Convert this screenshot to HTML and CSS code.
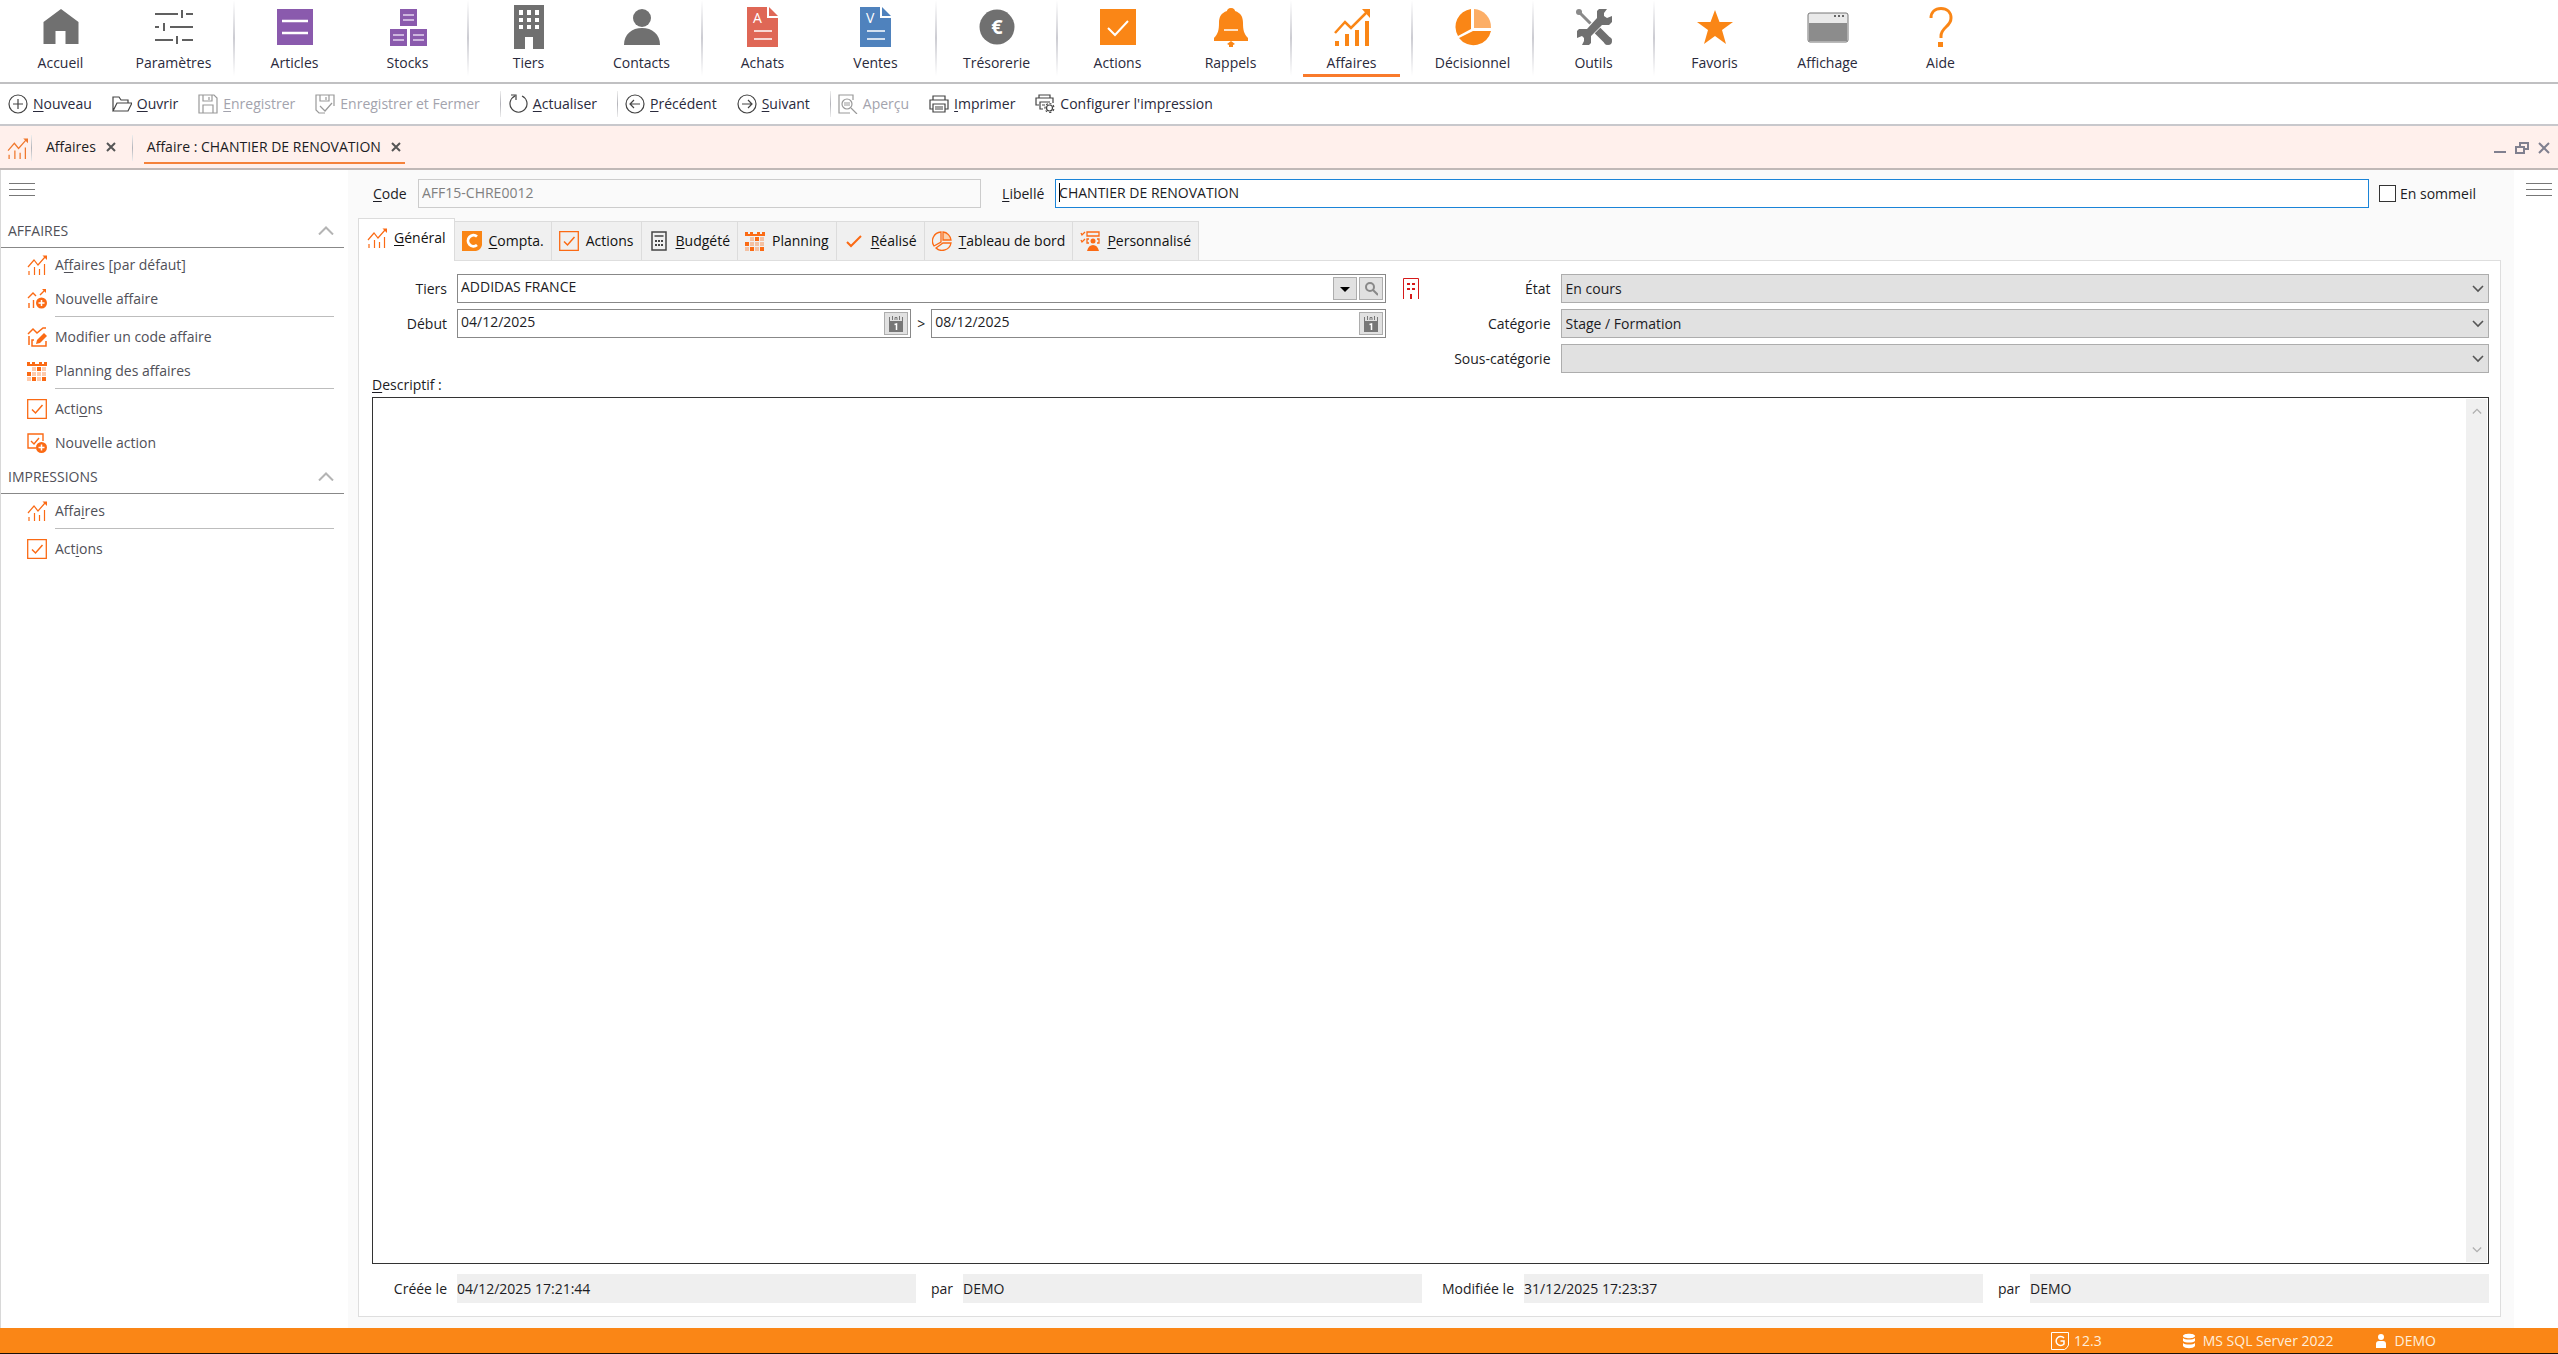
FILE: index.html
```html
<!DOCTYPE html>
<html lang="fr">
<head>
    <meta charset="UTF-8">
    <meta name="viewport" content="width=device-width, initial-scale=1.0">
    <title>Affaire : CHANTIER DE RENOVATION</title>
    <link rel="stylesheet" href="styles.css">
</head>
<body>
    <!-- Icônes partagées -->
    <svg class="symbols" aria-hidden="true">
        <symbol id="i-chart" viewBox="0 0 20 20">
            <g fill="none" stroke="currentColor" stroke-width="1.2">
                <path d="M1 12 7 5l4 5 7-8"/>
                <path d="M2 20v-4M7.500 20v-8M12.500 20v-6M17.500 20V9"/>
            </g>
            <path fill="currentColor" d="M15.500.500H20V5z"/>
        </symbol>
        <symbol id="i-chart-plus" viewBox="0 0 20 20">
            <g fill="none" stroke="currentColor" stroke-width="1.4">
                <path d="M1 9l5-5 3 3M13 6l5-5M2 19v-5M6.500 19v-8"/>
            </g>
            <path fill="currentColor" d="M15 0h4v4z"/>
            <circle cx="14.500" cy="14" r="5.500" fill="currentColor"/>
            <path stroke="#fff" stroke-width="1.500" d="M11.500 14h6M14.500 11v6"/>
        </symbol>
        <symbol id="i-chart-edit" viewBox="0 0 20 20">
            <g fill="none" stroke="currentColor" stroke-width="1.500">
                <path d="M1 7l5-5 4 4 6-5h3M2 18V9M7 13H5v6h14v-5"/>
            </g>
            <path fill="currentColor" d="M9 17l1-4 7-7 3 3-7 7z"/>
        </symbol>
        <symbol id="i-planning" viewBox="0 0 20 20">
            <path fill="currentColor" d="M0 1h3v2h2V1h3v2h4V1h3v2h2V1h3v4H0zM10 6h4v4h-4zM0 11h4v4H0zM5 16h4v4H5zM15 16h4v4h-4z"/>
            <path fill="currentColor" opacity=".35" d="M5 6h4v4H5zM15 6h4v4h-4zM5 11h4v4H5zM10 11h4v4h-4zM15 11h4v4h-4zM0 16h4v4H0zM10 16h4v4h-4z"/>
        </symbol>
        <symbol id="i-check" viewBox="0 0 20 20">
            <path fill="none" stroke="currentColor" stroke-width="1.300" d="M.700.700h18.600v18.600H.700z"/>
            <path fill="none" stroke="currentColor" stroke-width="1.500" d="M5 10.500l3.500 3.500 7-8"/>
        </symbol>
        <symbol id="i-check-plus" viewBox="0 0 20 20">
            <path fill="none" stroke="currentColor" stroke-width="1.400" d="M9 15H1V1h15v7M4 8l3 3 5-6"/>
            <circle cx="14.500" cy="14.500" r="5.500" fill="currentColor"/>
            <path stroke="#fff" stroke-width="1.500" d="M11.500 14.500h6M14.500 11.500v6"/>
        </symbol>
        <symbol id="i-menu" viewBox="0 0 26 16">
            <path fill="#777" d="M0 1h26v1H0zM0 7h26v1H0zM0 13h26v1H0z"/>
        </symbol>
        <symbol id="i-up" viewBox="0 0 16 9">
            <path fill="none" stroke="#b4b4b4" stroke-width="2" d="M1 8.500l7-7 7 7"/>
        </symbol>
        <symbol id="i-down" viewBox="0 0 12 8">
            <path fill="none" stroke="currentColor" stroke-width="1.600" d="M1 1l5 5 5-5"/>
        </symbol>
        <symbol id="i-close" viewBox="0 0 12 12">
            <path fill="none" stroke="currentColor" stroke-width="2" d="M2 2l8 8M10 2l-8 8"/>
        </symbol>
        <symbol id="i-calendar" viewBox="0 0 14 16">
            <path fill="#777" d="M0 5h14v11H0z"/>
            <path fill="none" stroke="#777" d="M.500 5V1M3.500 4V0M6 4V1.500h2V4M10.500 4V0M13.500 5V1"/>
            <path fill="none" stroke="#fff" stroke-width="1.500" d="M5.500 8.500L7.500 8v6"/>
        </symbol>
    </svg>

    <nav class="ribbon">
        <button class="ribbon-item">
            <svg viewBox="0 0 44 44"><path fill="#707070" d="M22 4L4.500 17v22h12V26h10v13h13V17z"/></svg>
            Accueil
        </button>
        <button class="ribbon-item">
            <svg viewBox="0 0 44 44"><path stroke="#606060" stroke-width="2" d="M3 9h23M30 5v8M34 9h7M3 22h4M12 18v8M18 22h23M3 35h18M25 31v8M30 35h11"/></svg>
            Paramètres
        </button>
        <span class="ribbon-sep"></span>
        <button class="ribbon-item">
            <svg viewBox="0 0 44 44"><path fill="#8a5aad" d="M4 4h36v36H4z"/><path stroke="#fff" stroke-width="2.500" d="M9 16h26M9 28h26"/></svg>
            Articles
        </button>
        <button class="ribbon-item">
            <svg viewBox="0 0 44 44"><path fill="#8a5aad" d="M14 4h17v17H14zM4 24h17v17H4zM24 24h17v17H24z"/><path stroke="#e3d3ee" stroke-width="1.500" d="M17 10h11M17 15h11M7 30h11M7 35h11M27 30h11M27 35h11"/></svg>
            Stocks
        </button>
        <span class="ribbon-sep"></span>
        <button class="ribbon-item">
            <svg viewBox="0 0 44 44"><path fill="#707070" d="M7 0h30v44H26V32h-8v12H7z"/><path fill="#fff" d="M12 5h4v5h-4zM20 5h4v5h-4zM28 5h4v5h-4zM12 13h4v4h-4zM20 13h4v4h-4zM28 13h4v4h-4zM12 20h4v4h-4zM20 20h4v4h-4zM28 20h4v4h-4z"/></svg>
            Tiers
        </button>
        <button class="ribbon-item">
            <svg viewBox="0 0 44 44"><circle cx="22" cy="13" r="9" fill="#707070"/><path fill="#707070" d="M4 40c0-11 8-17 18-17s18 6 18 17z"/></svg>
            Contacts
        </button>
        <span class="ribbon-sep"></span>
        <button class="ribbon-item">
            <svg viewBox="0 0 44 44"><path fill="#df6756" d="M6 2h20v11h11v29H6z"/><path fill="#df6756" d="M28 2l9 9h-9z"/><path stroke="#fff" stroke-width="1.500" d="M13 26h18M13 34h18"/><text x="12" y="18" class="doc-letter">A</text></svg>
            Achats
        </button>
        <button class="ribbon-item">
            <svg viewBox="0 0 44 44"><path fill="#4f82bd" d="M6 2h20v11h11v29H6z"/><path fill="#4f82bd" d="M28 2l9 9h-9z"/><path stroke="#fff" stroke-width="1.500" d="M13 26h18M13 34h18"/><text x="12" y="18" class="doc-letter">V</text></svg>
            Ventes
        </button>
        <span class="ribbon-sep"></span>
        <button class="ribbon-item">
            <svg viewBox="0 0 44 44"><circle cx="22" cy="22" r="17.500" fill="#707070"/><text x="22" y="29" class="euro">€</text></svg>
            Trésorerie
        </button>
        <span class="ribbon-sep"></span>
        <button class="ribbon-item">
            <svg viewBox="0 0 44 44"><path fill="#fa8616" d="M4 4h36v36H4z"/><path fill="none" stroke="#fff" stroke-width="2" d="M12 23l7 7 13-14"/></svg>
            Actions
        </button>
        <button class="ribbon-item">
            <svg viewBox="0 0 44 44"><path fill="#fa8616" d="M22 3c3 0 4 2 4 3 6 2 8 6 8 12 0 7 1 11 5 15v3H5v-3c4-4 5-8 5-15 0-6 2-10 8-12 0-1 1-3 4-3z"/><path fill="#fa8616" d="M18 39l4-3 4 3-2 1v2h-4v-2z"/><path stroke="#fff" stroke-width="1.500" d="M15 25h14"/></svg>
            Rappels
        </button>
        <span class="ribbon-sep"></span>
        <button class="ribbon-item active">
            <svg viewBox="0 0 44 44"><path fill="none" stroke="#fa8616" stroke-width="2.500" d="M5 28l10-11 6 6L38 6"/><path fill="#fa8616" d="M32 4h8v9zM5 36h4v5H5zM15 29h4v12h-4zM25 25h4v16h-4zM35 16h4v25h-4z"/></svg>
            Affaires
        </button>
        <span class="ribbon-sep"></span>
        <button class="ribbon-item">
            <svg viewBox="0 0 44 44"><path fill="#fa8616" d="M20 4v20L7 31A18 18 0 0 1 20 4zM22 26h18A18 18 0 0 1 8 33z"/><path fill="#fcae66" d="M23 4a18 18 0 0 1 17 19H23z"/></svg>
            Décisionnel
        </button>
        <span class="ribbon-sep"></span>
        <button class="ribbon-item">
            <svg viewBox="0 0 44 44"><path stroke="#8a8a8a" stroke-width="3" d="M7 7l12 12"/><circle cx="7" cy="7" r="3" fill="#8a8a8a"/><path stroke="#707070" stroke-width="8" d="M25 25l12 12"/><circle cx="36" cy="36" r="4" fill="#707070"/><path stroke="#fff" stroke-width="10" d="M14 30l16-16"/><path fill="#707070" d="M25 6l2-2h8l-3 4v3l3 2 5-2v6l-3 3h-7L19 31v7l-2 2h-7l2-4v-3l-2-2-5 2v-7l2-2h8l10-11z"/></svg>
            Outils
        </button>
        <span class="ribbon-sep"></span>
        <button class="ribbon-item">
            <svg viewBox="0 0 44 44"><path fill="#fa8616" d="M22 5l4.500 12H40L29 25l4 14-11-8-11 8 4-14L4 17h13.500z"/></svg>
            Favoris
        </button>
        <button class="ribbon-item">
            <svg viewBox="0 0 44 44"><rect x="2" y="8" width="40" height="29" rx="2" fill="#e9e9e9" stroke="#777"/><path fill="#8c8c8c" d="M3 18h38v18H3z"/><path fill="#666" d="M28 10h2v2h-2zM32 10h2v2h-2zM36 10h2v2h-2z"/></svg>
            Affichage
        </button>
        <button class="ribbon-item">
            <svg viewBox="0 0 44 44"><path fill="none" stroke="#fa8616" stroke-width="3" d="M12 13c0-6 4-9.500 10-9.500S32 7 32 13c0 9-10 9-10 18v2"/><path fill="#fa8616" d="M19 37h5v5h-5z"/></svg>
            Aide
        </button>
    </nav>

    <div class="toolbar">
        <button class="tool"><svg viewBox="0 0 20 20"><circle cx="10" cy="10" r="9"/><path d="M10 5v10M5 10h10"/></svg><span><u>N</u>ouveau</span></button>
        <button class="tool"><svg viewBox="0 0 20 20"><path d="M1 17V3h6l2 3h7v3M1 17L5 9h15l-4 8z"/></svg><span><u>O</u>uvrir</span></button>
        <button class="tool" disabled><svg viewBox="0 0 20 20"><path d="M1 1h15l3 3v15H1zM5 1v6h9V1M5 19v-8h10v8M11 3v3"/></svg><span><u>E</u>nregistrer</span></button>
        <button class="tool" disabled><svg viewBox="0 0 20 20"><path d="M10 19H4l-3-3V1h18v11M5 1v6h9V1M11 3v3M5 12l5 5 7-8"/></svg><span>Enregistrer et Fermer</span></button>
        <span class="tool-sep"></span>
        <button class="tool"><svg viewBox="0 0 20 20"><path d="M7 2a8.500 8.500 0 1 0 7 0M3 1h5v5"/></svg><span><u>A</u>ctualiser</span></button>
        <span class="tool-sep"></span>
        <button class="tool"><svg viewBox="0 0 20 20"><circle cx="10" cy="10" r="9"/><path d="M15 10H5M9 6l-4 4 4 4"/></svg><span><u>P</u>récédent</span></button>
        <button class="tool"><svg viewBox="0 0 20 20"><circle cx="10" cy="10" r="9"/><path d="M5 10h10M11 6l4 4-4 4"/></svg><span><u>S</u>uivant</span></button>
        <span class="tool-sep"></span>
        <button class="tool" disabled><svg viewBox="0 0 20 20"><path d="M12 19H1V1h14v5M13 14l6 6"/><circle cx="9" cy="10" r="5"/><path d="M6 9h6M6 11h6"/></svg><span>Aperçu</span></button>
        <button class="tool"><svg viewBox="0 0 20 20"><path d="M4 6V2h12v4M4 15H1V6h18v9h-3M4 10h12v8H4zM6 13h8M6 15h8"/></svg><span><u>I</u>mprimer</span></button>
        <button class="tool"><svg viewBox="0 0 20 20"><path d="M4 4V1h11v3M4 11H1V4h17v5M8 15H5V8h10M7 11h3"/><circle cx="14.500" cy="14" r="3"/><path stroke-dasharray="2 2" d="M14.500 9.500a4.500 4.500 0 1 1-.1 0"/></svg><span>Configurer l'imp<u>r</u>ession</span></button>
    </div>

    <div class="docbar">
        <svg class="docbar-icon"><use href="#i-chart"/></svg>
        <span class="tool-sep"></span>
        <div class="doc">Affaires <button aria-label="Fermer Affaires"><svg><use href="#i-close"/></svg></button></div>
        <span class="tool-sep"></span>
        <div class="doc active">Affaire : CHANTIER DE RENOVATION <button aria-label="Fermer la fiche"><svg><use href="#i-close"/></svg></button></div>
        <div class="window-buttons">
            <button aria-label="Réduire"><svg viewBox="0 0 14 14"><path d="M1 11h12"/></svg></button>
            <button aria-label="Restaurer"><svg viewBox="0 0 14 14"><path d="M5 5V2h8v6H9M1 6h8v6H1z"/></svg></button>
            <button aria-label="Fermer"><svg viewBox="0 0 14 14"><path d="M2 2l10 10M12 2L2 12"/></svg></button>
        </div>
    </div>

    <div class="workspace">
        <aside class="sidebar">
            <button class="menu-btn" aria-label="Menu"><svg><use href="#i-menu"/></svg></button>
            <h2>AFFAIRES <svg><use href="#i-up"/></svg></h2>
            <ul>
                <li><a href="#"><svg><use href="#i-chart"/></svg><span>A<u>f</u>faires [par défaut]</span></a></li>
                <li><a href="#"><svg><use href="#i-chart-plus"/></svg><span>Nouvelle affaire</span></a></li>
                <li class="split"><a href="#"><svg><use href="#i-chart-edit"/></svg><span>Modifier un code affaire</span></a></li>
                <li><a href="#"><svg><use href="#i-planning"/></svg><span>Planning des affaires</span></a></li>
                <li class="split"><a href="#"><svg><use href="#i-check"/></svg><span>Acti<u>o</u>ns</span></a></li>
                <li><a href="#"><svg><use href="#i-check-plus"/></svg><span>Nouvelle action</span></a></li>
            </ul>
            <h2>IMPRESSIONS <svg><use href="#i-up"/></svg></h2>
            <ul>
                <li><a href="#"><svg><use href="#i-chart"/></svg><span>Affa<u>i</u>res</span></a></li>
                <li class="split"><a href="#"><svg><use href="#i-check"/></svg><span>Act<u>i</u>ons</span></a></li>
            </ul>
        </aside>

        <main class="record">
            <div class="record-head">
                <label for="code"><u>C</u>ode</label>
                <input type="text" id="code" value="AFF15-CHRE0012" disabled>
                <label for="libelle" class="libelle-label"><u>L</u>ibellé</label>
                <div class="focus-field">
                    <input type="text" id="libelle" value="CHANTIER DE RENOVATION">
                    <span class="caret"></span>
                </div>
                <div class="sleep">
                    <input type="checkbox" id="sommeil">
                    <label for="sommeil">En sommeil</label>
                </div>
            </div>

            <div class="tabs">
                <button class="tab active"><svg class="orange"><use href="#i-chart"/></svg><span><u>G</u>énéral</span></button>
                <button class="tab"><svg viewBox="0 0 20 20"><path fill="#fa8616" d="M0 0h20v14q-1 5-6 6H0z"/><path fill="none" stroke="#fff" stroke-width="2.800" d="M15 5.500A5.500 5.500 0 1 0 15 14"/></svg><span><u>C</u>ompta.</span></button>
                <button class="tab"><svg class="orange"><use href="#i-check"/></svg><span>Actions</span></button>
                <button class="tab"><svg viewBox="0 0 20 20"><path fill="none" stroke="#444" stroke-width="1.500" d="M3 1h14v18H3zM5.500 5h9"/><path fill="#444" d="M6 9h2v2H6zM9 9h2v2H9zM12 9h2v2h-2zM6 13h2v2H6zM9 13h2v2H9zM12 13h2v2h-2z"/></svg><span><u>B</u>udgété</span></button>
                <button class="tab"><svg class="orange"><use href="#i-planning"/></svg><span>Planning</span></button>
                <button class="tab"><svg class="orange" viewBox="0 0 20 20"><path fill="none" stroke="currentColor" stroke-width="2" d="M3 11l4 4L17 5"/></svg><span><u>R</u>éalisé</span></button>
                <button class="tab"><svg class="orange" viewBox="0 0 20 20"><path fill="#fcd0ac" d="M11 1a9 9 0 0 1 8 8h-8z"/><path fill="none" stroke="currentColor" stroke-width="1.300" d="M9 11V1a9 9 0 0 0-7 14zM11 1a9 9 0 0 1 8 8h-8zM11 12h8a9 9 0 0 1-15 5z"/></svg><span><u>T</u>ableau de bord</span></button>
                <button class="tab"><svg class="orange" viewBox="0 0 20 20"><path fill="none" stroke="currentColor" stroke-width="1.300" d="M7 1h12v4H7zM1 2l1 2 3-3M1 9l1 2 3-3M9 8H7v4h2M17 8h2v4h-2"/><circle cx="13" cy="10" r="2.500" fill="currentColor"/><path fill="currentColor" d="M7 20c1-4 3-6 6-6s5 2 6 6z"/></svg><span><u>P</u>ersonnalisé</span></button>
            </div>

            <section class="panel">
                <div class="form-grid">
                    <label for="tiers">Tiers</label>
                    <div class="field">
                        <input type="text" id="tiers" value="ADDIDAS FRANCE">
                        <button aria-label="Liste des tiers"><svg viewBox="0 0 14 14"><path d="M2 5h10l-5 5z"/></svg></button>
                        <button aria-label="Rechercher"><svg viewBox="0 0 14 14"><circle cx="6" cy="5" r="4" fill="none" stroke="#888" stroke-width="2"/><path stroke="#888" stroke-width="2" d="M9 8l5 5"/></svg></button>
                    </div>
                    <div class="with-icon">
                        <svg class="company" viewBox="0 0 16 22"><path fill="none" stroke="#d61a1a" d="M.500 21V.500h15V21"/><path fill="#d61a1a" d="M4 5h3v2H4zM9 5h3v2H9zM4 10h3v2H4zM9 10h3v2H9zM7 16h2v5H7z"/></svg>
                        <label for="etat">État</label>
                    </div>
                    <div class="select">
                        <select id="etat"><option>En cours</option></select>
                        <svg><use href="#i-down"/></svg>
                    </div>

                    <label for="debut">Début</label>
                    <div class="dates">
                        <div class="field">
                            <input type="text" id="debut" value="04/12/2025">
                            <button aria-label="Choisir la date de début"><svg><use href="#i-calendar"/></svg></button>
                        </div>
                        <span>&gt;</span>
                        <div class="field">
                            <input type="text" aria-label="Fin" value="08/12/2025">
                            <button aria-label="Choisir la date de fin"><svg><use href="#i-calendar"/></svg></button>
                        </div>
                    </div>
                    <label for="categorie">Catégorie</label>
                    <div class="select">
                        <select id="categorie"><option>Stage / Formation</option></select>
                        <svg><use href="#i-down"/></svg>
                    </div>

                    <label class="third" for="sous-categorie">Sous-catégorie</label>
                    <div class="select">
                        <select id="sous-categorie"><option></option></select>
                        <svg><use href="#i-down"/></svg>
                    </div>
                </div>

                <label class="desc-label" for="descriptif"><u>D</u>escriptif :</label>
                <div class="desc">
                    <textarea id="descriptif"></textarea>
                    <div class="scroll">
                        <svg class="flip"><use href="#i-down"/></svg>
                        <svg><use href="#i-down"/></svg>
                    </div>
                </div>

                <div class="audit">
                    <label for="cree-le">Créée le</label>
                    <input type="text" id="cree-le" value="04/12/2025 17:21:44" readonly>
                    <label for="cree-par">par</label>
                    <input type="text" id="cree-par" value="DEMO" readonly>
                    <label for="modif-le">Modifiée le</label>
                    <input type="text" id="modif-le" value="31/12/2025 17:23:37" readonly>
                    <label for="modif-par">par</label>
                    <input type="text" id="modif-par" value="DEMO" readonly>
                </div>
            </section>
        </main>

        <aside class="rail">
            <button class="menu-btn" aria-label="Volet droit"><svg><use href="#i-menu"/></svg></button>
        </aside>
    </div>

    <footer class="status">
        <span class="version"><svg viewBox="0 0 18 18"><path fill="none" stroke="#fff" d="M.500.500h17V13q-1 3-4 4.500H.500z"/><path fill="none" stroke="#fff" stroke-width="1.500" d="M13 6a4.500 4.500 0 1 0 0 6V9H9.500"/></svg>12.3</span>
        <span class="server"><svg viewBox="0 0 18 18"><path fill="#fff" d="M3 4c0-3 12-3 12 0s-12 3-12 0zM3 6c2 2 10 2 12 0v3c-2 2-10 2-12 0zM3 11c2 2 10 2 12 0v3c-2 3-10 3-12 0z"/></svg>MS SQL Server 2022</span>
        <span class="user"><svg viewBox="0 0 18 18"><circle cx="9" cy="5" r="3" fill="#fff"/><path fill="#fff" d="M4 16v-4q0-3 3-3h4q3 0 3 3v4z"/></svg>DEMO</span>
    </footer>
</body>
</html>
```
FILE: styles.css
```css
* {
    box-sizing: border-box;
}
body {
    margin: 0;
    min-height: 100vh;
    display: flex;
    flex-direction: column;
    font-family: "Segoe UI", "Open Sans", "Noto Sans", sans-serif;
    font-size: 14px;
    line-height: 20px;
    color: #1c1c24;
    background: #fff;
}
button, input, select, textarea {
    font: inherit;
    color: inherit;
    margin: 0;
}
button {
    border: none;
    background: none;
    padding: 0;
    cursor: pointer;
}
u {
    text-underline-offset: 2px;
}
.symbols {
    display: none;
}

/* Ruban principal */
.ribbon {
    display: flex;
    height: 84px;
    padding-left: 12px;
    border-bottom: 2px solid #c0c0c2;
}
.ribbon-item {
    flex: 0 0 97px;
    height: 77px;
    margin-right: 16px;
    padding-top: 5px;
    display: flex;
    flex-direction: column;
    align-items: center;
    gap: 4px;
    color: #2a2a3c;
    border-bottom: 3px solid transparent;
}
.ribbon-item svg {
    width: 44px;
    height: 44px;
}
.ribbon-item.active {
    border-bottom-color: #f97a2b;
}
.ribbon-sep {
    width: 2px;
    height: 76px;
    margin: 0 11px 0 -5px;
    background: linear-gradient(#fff, #ccccd2, #fff);
}
.doc-letter {
    font-size: 14px;
    fill: #fff;
}
.euro {
    font-size: 20px;
    font-weight: bold;
    fill: #fff;
    text-anchor: middle;
}

/* Barre d'outils */
.toolbar {
    display: flex;
    align-items: center;
    height: 42px;
    padding-left: 8px;
    border-bottom: 2px solid #c8c8cc;
}
.tool {
    display: flex;
    align-items: center;
    gap: 5px;
    margin-right: 20px;
    color: #2a2a3c;
    white-space: nowrap;
}
.tool svg {
    width: 20px;
    height: 20px;
    fill: none;
    stroke: #444;
    stroke-width: 1.2;
}
.tool:disabled {
    color: #a3a3ad;
}
.tool:disabled svg {
    stroke: #999;
}
.tool-sep {
    width: 1px;
    height: 26px;
    margin-right: 7px;
    background: linear-gradient(#eee, #b4b4ba, #eee);
}

/* Fiches ouvertes */
.docbar {
    display: flex;
    align-items: center;
    height: 44px;
    padding: 2px 7px 0;
    background: #fff0ec;
    border-bottom: 2px solid #c0b8b6;
}
.docbar-icon {
    width: 21px;
    height: 21px;
    margin-right: 3px;
    color: #f0782d;
}
.docbar .tool-sep {
    margin-right: 11px;
}
.doc {
    display: flex;
    align-items: center;
    gap: 9px;
    height: 32px;
    margin-right: 12px;
    padding: 0 3px;
    border-bottom: 2px solid transparent;
}
.doc.active {
    border-bottom-color: #f5823a;
}
.doc svg {
    display: block;
    width: 12px;
    height: 12px;
    color: #555;
}
.window-buttons {
    margin-left: auto;
    display: flex;
    gap: 8px;
}
.window-buttons svg {
    display: block;
    width: 14px;
    height: 14px;
    fill: none;
    stroke: #80808f;
    stroke-width: 2;
}

/* Zone de travail */
.workspace {
    flex: 1;
    display: flex;
}
.sidebar {
    flex: 0 0 348px;
    padding-right: 4px;
    border-left: 1px solid #d8d8d8;
    color: #505058;
}
.menu-btn {
    display: block;
    height: 44px;
    padding: 0 8px 4px;
}
.menu-btn svg {
    display: block;
    width: 26px;
    height: 16px;
}
.sidebar h2 {
    display: flex;
    align-items: center;
    justify-content: space-between;
    height: 34px;
    margin: 0;
    padding: 0 10px 0 7px;
    font-size: 14px;
    font-weight: normal;
    border-bottom: 1px solid #888;
}
.sidebar h2 svg {
    width: 16px;
    height: 9px;
}
.sidebar ul {
    list-style: none;
    margin: 0;
    padding: 0 10px 0 26px;
}
.sidebar li a {
    display: flex;
    align-items: center;
    gap: 8px;
    height: 34px;
    color: inherit;
    text-decoration: none;
}
.sidebar li svg {
    width: 20px;
    height: 20px;
    color: #fb6a14;
}
.sidebar li.split::before {
    content: "";
    display: block;
    height: 3px;
    margin-left: 28px;
    border-top: 1px solid #bdbdbd;
}
.rail {
    flex: 0 0 44px;
}
.rail .menu-btn {
    padding: 0 6px 4px 12px;
}
.record {
    flex: 1;
    display: flex;
    flex-direction: column;
    padding: 9px 13px 11px 10px;
    background: #fafafa;
}

/* En-tête de fiche */
.record-head {
    display: grid;
    grid-template-columns: 45px 3fr 74px 7fr 120px;
    align-items: center;
    padding: 0 12px 0 15px;
}
.libelle-label {
    padding-left: 21px;
}
.record-head input[type="text"] {
    width: 100%;
    min-width: 0;
    height: 29px;
    padding: 0 3px 3px;
    border: 1px solid #ccc;
    background: #fff;
}
.record-head input:disabled {
    color: #808080;
    background: #fafafa;
}
.focus-field {
    position: relative;
}
.focus-field input[type="text"] {
    border-color: #1a84d8;
}
.caret {
    position: absolute;
    left: 4px;
    top: 4px;
    width: 1px;
    height: 19px;
    background: #000;
}
.sleep {
    display: flex;
    align-items: center;
    gap: 4px;
    padding-left: 10px;
}
.sleep input {
    appearance: none;
    width: 17px;
    height: 17px;
    border: 1px solid #333;
    background: #fff;
}

/* Onglets */
.tabs {
    display: flex;
    align-items: flex-end;
    height: 52px;
}
.tab {
    display: flex;
    align-items: center;
    gap: 7px;
    height: 39px;
    padding: 0 7px;
    color: #111;
    background: #f0f0f0;
    border: 1px solid #dcdcdc;
    border-left: none;
    border-bottom: none;
    white-space: nowrap;
}
.tab svg {
    width: 20px;
    height: 20px;
}
.orange {
    color: #fb6a14;
}
.tab.active {
    position: relative;
    height: 43px;
    margin-bottom: -1px;
    padding: 0 8px 4px;
    background: #fff;
    border-left: 1px solid #dcdcdc;
}

/* Onglet Général */
.panel {
    flex: 1;
    display: flex;
    flex-direction: column;
    padding: 13px 11px 13px 13px;
    background: #fff;
    border: 1px solid #dedede;
}
.form-grid {
    display: grid;
    grid-template-columns: 85px 1fr 175px 1fr;
    row-gap: 6px;
    align-items: center;
}
.form-grid label {
    padding-right: 10px;
    text-align: right;
}
.form-grid .third {
    grid-column: 3;
}
.field {
    flex: 1;
    display: flex;
    gap: 2px;
    height: 29px;
    padding: 2px;
    background: #fff;
    border: 1px solid #888;
}
.field input {
    flex: 1;
    min-width: 0;
    padding: 0 1px 3px;
    border: none;
    background: none;
}
.field button {
    display: flex;
    align-items: center;
    justify-content: center;
    width: 24px;
    background: #e1e1e1;
    border: 1px solid #adadad;
}
.field button svg {
    width: 14px;
    height: 16px;
}
.dates {
    display: flex;
    align-items: center;
}
.dates span {
    width: 20px;
    text-align: center;
}
.with-icon {
    display: flex;
    align-items: center;
    justify-content: space-between;
    padding-left: 17px;
}
.company {
    width: 16px;
    height: 22px;
}
.select {
    position: relative;
}
.select select {
    appearance: none;
    display: block;
    width: 100%;
    height: 29px;
    padding: 0 4px;
    border: 1px solid #adadad;
    border-radius: 0;
    background: #e1e1e1;
}
.select svg {
    position: absolute;
    right: 5px;
    top: 11px;
    width: 12px;
    height: 8px;
    color: #555;
    pointer-events: none;
}
.desc-label {
    margin: 2px 0;
}
.desc {
    flex: 1;
    display: flex;
    padding: 1px;
    border: 1px solid #333;
}
.desc textarea {
    flex: 1;
    padding: 2px 4px;
    border: none;
    outline: none;
    resize: none;
}
.scroll {
    width: 21px;
    display: flex;
    flex-direction: column;
    justify-content: space-between;
    align-items: center;
    padding: 8px 0;
    background: #f0f0f0;
}
.scroll svg {
    width: 10px;
    height: 8px;
    color: #b0b0b0;
}
.flip {
    transform: rotate(180deg);
}
.audit {
    display: grid;
    grid-template-columns: 85px 1fr 47px 1fr 102px 1fr 47px 1fr;
    align-items: center;
    margin-top: 10px;
}
.audit label {
    padding-right: 10px;
    text-align: right;
}
.audit input {
    min-width: 0;
    height: 29px;
    padding: 0;
    border: none;
    background: #efefef;
}

/* Barre d'état */
.status {
    display: flex;
    justify-content: flex-end;
    height: 26px;
    padding-right: 122px;
    color: #ffeeda;
    background: #fa8616;
    border-bottom: 1px solid #1a1008;
}
.status span {
    display: flex;
    align-items: center;
    gap: 5px;
}
.status svg {
    width: 18px;
    height: 18px;
}
.server {
    margin-left: 78px;
}
.user {
    margin-left: 38px;
}
```
